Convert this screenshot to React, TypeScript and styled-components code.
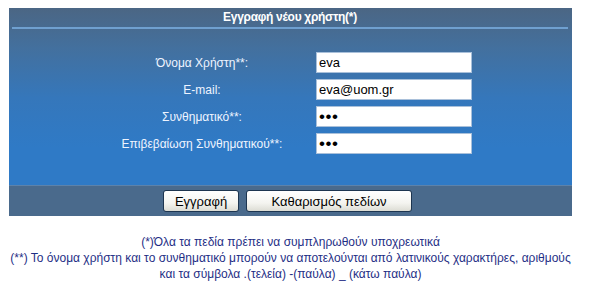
import styled, { createGlobalStyle } from "styled-components";

const GlobalStyle = createGlobalStyle`
  body {
    margin: 8px 0 0 9px;
    background: #fff;
    font-family: "Liberation Sans", Arial, sans-serif;
    font-size: 12px;
  }
`;

const fields = [
  { label: "Όνομα Χρήστη**:", type: "text", value: "eva" },
  { label: "E-mail:", type: "text", value: "eva@uom.gr" },
  { label: "Συνθηματικό**:", type: "password", value: "eva" },
  { label: "Επιβεβαίωση Συνθηματικού**:", type: "password", value: "eva" },
];

const App = () => {
  return (
    <Wrapper>
      <GlobalStyle />
      <Panel>
        <TitleBar>Εγγραφή νέου χρήστη(*)</TitleBar>
        <Body>
          <FormGrid>
            {fields.map((f) => (
              <Row key={f.label}>
                <Label>{f.label}</Label>
                <Input
                  type={f.type}
                  $secret={f.type === "password"}
                  defaultValue={f.value}
                  readOnly
                />
              </Row>
            ))}
          </FormGrid>
        </Body>
        <ButtonBar>
          <Button $width={76}>Εγγραφή</Button>
          <Button $width={166}>Καθαρισμός πεδίων</Button>
        </ButtonBar>
      </Panel>
      <Notes>
        <NoteLine>(*)Όλα τα πεδία πρέπει να συμπληρωθούν υποχρεωτικά</NoteLine>
        <NoteLine>
          (**) Το όνομα χρήστη και το συνθηματικό μπορούν να αποτελούνται από
          λατινικούς χαρακτήρες, αριθμούς
        </NoteLine>
        <NoteLine>και τα σύμβολα .(τελεία) -(παύλα) _ (κάτω παύλα)</NoteLine>
      </Notes>
    </Wrapper>
  );
};

export default App;

const Wrapper = styled.div`
  width: 563px;
`;

const Panel = styled.div`
  background: linear-gradient(
    to bottom,
    #4b6684 0px,
    #43709e 40px,
    #3577bb 90px,
    #2f7ac6 140px,
    #2f7ac6 100%
  );
`;

const TitleBar = styled.div`
  height: 19px;
  line-height: 19px;
  margin: 0 4px 0 3px;
  border-bottom: 2px solid #6fa0d0;
  text-align: center;
  color: #fff;
  font-weight: bold;
  font-size: 12px;
  letter-spacing: -0.3px;
`;

const Body = styled.div`
  padding: 23px 0 31px;
  display: flex;
  justify-content: center;
`;

const FormGrid = styled.div`
  display: grid;
  grid-template-columns: 180px 156px;
  column-gap: 24px;
  row-gap: 6px;
  margin-left: 3px;
`;

const Row = styled.div`
  display: contents;
`;

const Label = styled.div`
  display: flex;
  align-items: center;
  justify-content: center;
  color: #eef4ff;
  font-size: 12px;
  white-space: nowrap;
`;

const Input = styled.input<{ $secret?: boolean }>`
  box-sizing: border-box;
  width: 156px;
  height: 21px;
  margin: 0;
  padding: 1px 2px;
  border: 1px solid #a9c0da;
  background: #fff;
  color: #000;
  font-family: "Liberation Sans", Arial, sans-serif;
  font-size: ${(p) => (p.$secret ? "17px" : "13px")};
  letter-spacing: ${(p) => (p.$secret ? "0.5px" : "0")};
  outline: none;
`;

const ButtonBar = styled.div`
  height: 31px;
  box-sizing: border-box;
  border-top: 1px solid #5d82aa;
  background: #4a6a8c;
  display: flex;
  align-items: center;
  justify-content: center;
  gap: 7px;
  padding-right: 6px;
`;

const Button = styled.button<{ $width: number }>`
  width: ${(p) => p.$width}px;
  height: 22px;
  margin: 0;
  padding: 0;
  border: 1px solid #1d3550;
  border-radius: 3px;
  background: linear-gradient(to bottom, #ffffff 0%, #f4f4f0 60%, #dcdcd4 100%);
  color: #000;
  font-family: "Liberation Sans", Arial, sans-serif;
  font-size: 13px;
`;

const Notes = styled.div`
  margin-top: 18px;
  text-align: center;
  color: #1f2f86;
  font-size: 12px;
  line-height: 16px;
`;

const NoteLine = styled.div`
  white-space: nowrap;
`;
